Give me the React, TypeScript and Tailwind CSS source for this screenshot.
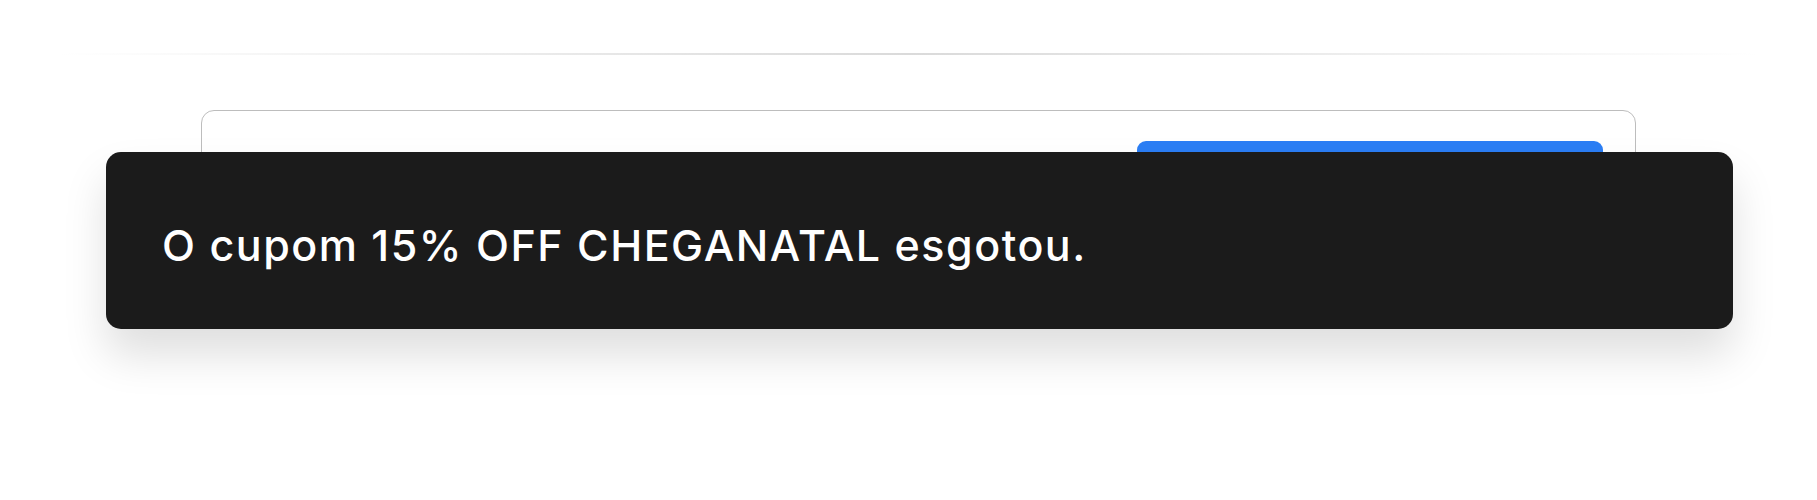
export default function App() {
  return (
    <div className="relative h-[500px] w-full overflow-hidden bg-white font-['Inter',sans-serif]">
      {/* header divider */}
      <div className="mx-[60px] mt-[53px] h-[2px] bg-gradient-to-r from-transparent via-[#dadada] to-transparent" />

      {/* coupon card behind the toast */}
      <div className="ml-[201px] mt-[55px] flex h-[150px] w-[1435px] justify-end rounded-[13px] border border-[#bdbdbd] px-[32px] pt-[30px]">
        <button className="h-[64px] w-[466px] rounded-[9px] bg-[#2b7ef5] text-lg font-semibold text-white">
          Aplicar
        </button>
      </div>

      {/* toast */}
      <div className="absolute left-[106px] top-[152px] flex h-[177px] w-[1627px] items-center rounded-[15px] bg-[#1b1b1b] pl-[56px] shadow-[0_26px_44px_rgba(0,0,0,0.13)]">
        <p className="pt-[10px] text-[43px] font-medium leading-none tracking-[0.035em] text-white">
          O cupom 15% OFF CHEGANATAL esgotou.
        </p>
      </div>
    </div>
  );
}
